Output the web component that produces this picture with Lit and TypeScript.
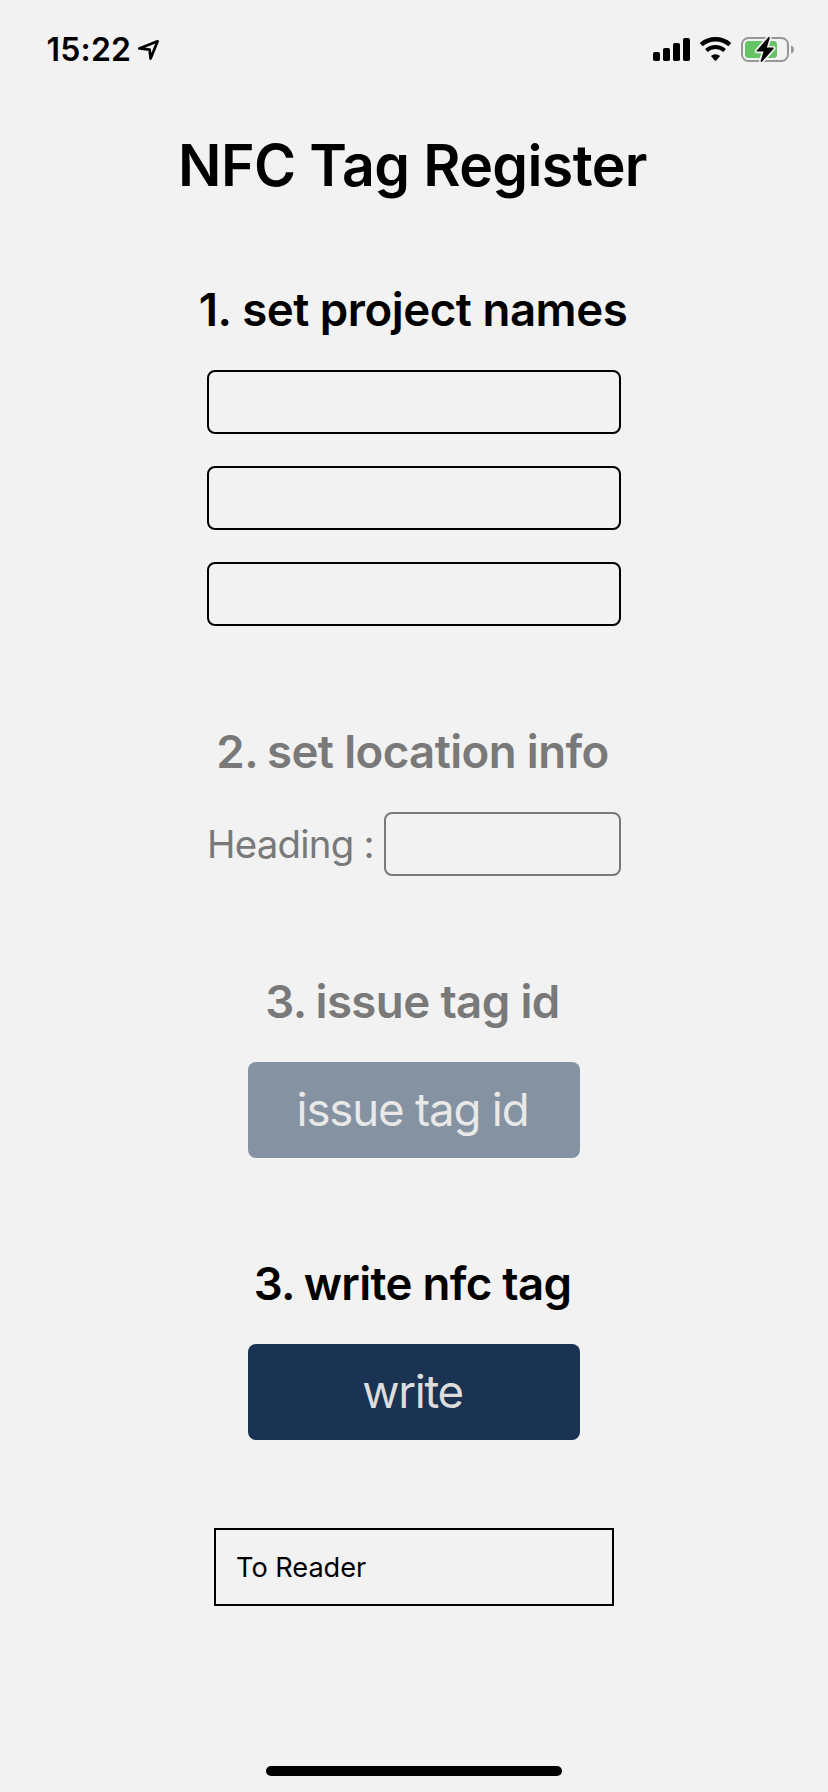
import { LitElement, html, css } from "lit";
import { customElement } from "lit/decorators.js";

@customElement("status-bar")
export class StatusBar extends LitElement {
  static styles = css`
    :host {
      display: flex;
      align-items: center;
      height: 100px;
      box-sizing: border-box;
      padding: 0 32px 0 46.5px;
      flex: none;
    }
    .time {
      font-size: 32px;
      line-height: 40px;
      font-weight: 600;
      letter-spacing: 0.19px;
      width: 85.5px;
    }
    .icons {
      display: flex;
      gap: 6px;
      margin-left: auto;
    }
    svg {
      display: block;
      height: 36px;
    }
    .location { width: 34px; }
    .signal { width: 40px; }
    .wifi { width: 36px; }
    .battery { width: 56px; }
  `;

  render() {
    return html`
      <span class="time">15:22</span>
      <svg class="location" viewBox="132 32 34 36">
        <path d="M157.6 41.2 139.3 48.4 149.6 49.6 150.6 58.6Z" fill="none" stroke="#000" stroke-width="2.7" stroke-linejoin="round" />
      </svg>
      <div class="icons">
        <svg class="signal" viewBox="652 32 40 36">
          <rect x="653" y="52" width="7" height="9" rx="1.8" />
          <rect x="663" y="48" width="7" height="13" rx="1.8" />
          <rect x="673" y="43" width="7" height="18" rx="1.8" />
          <rect x="683" y="38" width="7" height="23" rx="1.8" />
        </svg>
        <svg class="wifi" viewBox="698 32 36 36">
          <g fill="none" stroke="#000">
            <path d="M701.2 44.6A21.8 21.8 0 0 1 729.8 44.6" stroke-width="4.5" />
            <path d="M706.4 50.5A13.9 13.9 0 0 1 724.6 50.5" stroke-width="4" />
          </g>
          <path d="M710.9 55.9A7 7 0 0 1 720.1 55.9L716.2 60.4Q715.5 61.1 714.8 60.4Z" />
        </svg>
        <svg class="battery" viewBox="740 32 56 36">
          <rect x="742" y="38" width="46" height="23" rx="6.5" fill="none" stroke="#979797" stroke-width="2" />
          <path d="M791 45.5Q794 46.5 794 49.5T791 53.5Z" fill="#979797" />
          <rect x="745" y="41" width="32" height="17" rx="3.5" fill="#65c466" />
          <path d="M768.6 37 756.6 50.7Q756 51.6 757 51.6H763.6L760.6 61Q760.9 62.7 762.2 61.6L773.6 48.7Q774.1 47.6 773 47.6H766.8L769.8 38Q769.8 36.2 768.6 37Z" stroke="#f2f2f2" stroke-width="3.4" paint-order="stroke" stroke-linejoin="round" />
        </svg>
      </div>
    `;
  }
}

@customElement("app-root")
export class AppRoot extends LitElement {
  static styles = css`
    :host {
      display: flex;
      flex-direction: column;
      height: 1792px;
      box-sizing: border-box;
      background: #f2f2f2;
      color: #000;
      font-family: "Inter", sans-serif;
      overflow: hidden;
    }
    main {
      display: flex;
      flex-direction: column;
      align-items: center;
      padding-top: 29px;
    }
    h1, h2 {
      margin: 0;
      font-weight: 600;
      white-space: nowrap;
    }
    h1 {
      font-size: 57.2px;
      line-height: 72px;
      letter-spacing: -0.63px;
      padding: 1px 3px 0 0;
      margin-bottom: 79px;
    }
    h2 {
      font-size: 45.6px;
      line-height: 56px;
      letter-spacing: -0.6px;
      padding: 1px 3px 0 0;
      margin-bottom: 32px;
    }
    .number {
      margin-right: -2px;
    }
    section {
      display: flex;
      flex-direction: column;
      align-items: center;
      width: 414px;
      margin-bottom: 97px;
    }
    .names h2 {
      letter-spacing: -0.47px;
      padding-right: 2px;
    }
    .names .number {
      margin-right: -0.5px;
    }
    .write h2 {
      letter-spacing: -0.68px;
    }
    .write {
      margin-bottom: 88px;
    }
    .disabled {
      color: #797979;
    }
    .fields {
      display: flex;
      flex-direction: column;
      gap: 32px;
      width: 100%;
    }
    .field {
      box-sizing: border-box;
      width: 100%;
      height: 64px;
      margin: 0;
      padding: 0 12px;
      border: 2px solid currentColor;
      border-radius: 8px;
      background: transparent;
      color: inherit;
      font: inherit;
      font-size: 36px;
    }
    .row {
      display: flex;
      align-items: center;
      width: 100%;
    }
    .label {
      flex: 0 0 177px;
      font-size: 38.4px;
      line-height: 48px;
      letter-spacing: -0.76px;
      white-space: nowrap;
    }
    .row .field {
      flex: 1;
      width: 0;
    }
    .button {
      box-sizing: border-box;
      width: 332px;
      height: 96px;
      border: 0;
      border-radius: 8px;
      padding: 0 3px 0 0;
      font: 400 45.6px/56px "Inter", sans-serif;
      letter-spacing: -1.18px;
      text-align: center;
      color: #dddddd;
      background: #1b3352;
    }
    .write .button {
      letter-spacing: -1.37px;
    }
    .disabled .button {
      color: #e8e8e8;
      background: #8592a2;
    }
    .reader {
      box-sizing: border-box;
      width: 400px;
      height: 78px;
      border: 2px solid #000;
      padding: 2px 20px 0;
      display: flex;
      align-items: center;
      font-size: 27.2px;
      line-height: 34px;
      letter-spacing: -0.04px;
    }
    .home {
      width: 296px;
      height: 10px;
      border-radius: 5px;
      background: #000;
      margin: auto auto 16px;
      flex: none;
    }
  `;

  render() {
    return html`
      <status-bar></status-bar>
      <main>
        <h1>NFC Tag Register</h1>
        <section class="names">
          <h2><span class="number">1.</span> set project names</h2>
          <div class="fields">
            ${[1, 2, 3].map((n) => html`<input class="field" aria-label="project name ${n}" />`)}
          </div>
        </section>
        <section class="disabled">
          <h2><span class="number">2.</span> set location info</h2>
          <div class="row">
            <span class="label">Heading :</span>
            <input class="field" aria-label="heading" disabled />
          </div>
        </section>
        <section class="disabled">
          <h2><span class="number">3.</span> issue tag id</h2>
          <button class="button" disabled>issue tag id</button>
        </section>
        <section class="write">
          <h2><span class="number">3.</span> write nfc tag</h2>
          <button class="button">write</button>
        </section>
        <div class="reader">To Reader</div>
      </main>
      <div class="home"></div>
    `;
  }
}
